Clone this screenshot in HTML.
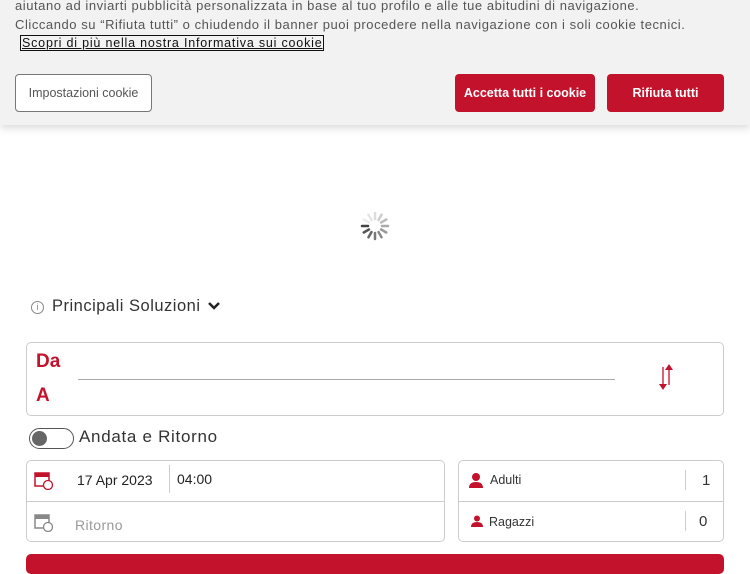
<!DOCTYPE html>
<html><head><style>
*{box-sizing:border-box;margin:0;padding:0}
body{width:750px;height:563px;overflow:hidden;background:#fff;font-family:"Liberation Sans",sans-serif;position:relative;color:#222}
.ban{position:absolute;left:0;top:0;width:750px;height:125px;background:#f2f2f2;box-shadow:0 3px 8px rgba(0,0,0,.15);z-index:2}
.t{position:absolute;left:15px;font-size:13px;color:#555;white-space:nowrap;letter-spacing:.55px}
.lnk{position:absolute;left:20px;top:35px;font-size:12.5px;color:#111;border:1px solid #111;padding:0 1px;text-decoration:underline;line-height:14px;letter-spacing:.8px;white-space:nowrap}
.btn{position:absolute;top:74px;height:38px;border-radius:4px;font-size:12.5px;display:flex;align-items:center;justify-content:center}
.red{background:#c3122b;color:#fff;font-weight:bold}
.box{position:absolute;border:1px solid #ccc;border-radius:5px}
.rl{color:#c3122b;font-weight:bold;font-size:19px;position:absolute}
</style></head><body>
<div class="ban">
<div class="t" style="top:-2px">aiutano ad inviarti pubblicità personalizzata in base al tuo profilo e alle tue abitudini di navigazione.</div>
<div class="t" style="top:17px">Cliccando su “Rifiuta tutti” o chiudendo il banner puoi procedere nella navigazione con i soli cookie tecnici.</div>
<div class="lnk">Scopri di più nella nostra Informativa sui cookie</div>
<div class="btn" style="left:15px;width:137px;background:#fff;border:1px solid #777;color:#555">Impostazioni cookie</div>
<div class="btn red" style="left:455px;width:140px">Accetta tutti i cookie</div>
<div class="btn red" style="left:607px;width:117px">Rifiuta tutti</div>
</div>
<svg style="position:absolute;left:360px;top:211px" width="30" height="30" viewBox="-15 -15 30 30">
<g stroke-width="2.5" stroke-linecap="round">
<line x1="0" y1="-13" x2="0" y2="-7" stroke="#ddd"/>
<line x1="0" y1="-13" x2="0" y2="-7" stroke="#ccc" transform="rotate(30)"/>
<line x1="0" y1="-13" x2="0" y2="-7" stroke="#bbb" transform="rotate(60)"/>
<line x1="0" y1="-13" x2="0" y2="-7" stroke="#aaa" transform="rotate(90)"/>
<line x1="0" y1="-13" x2="0" y2="-7" stroke="#999" transform="rotate(120)"/>
<line x1="0" y1="-13" x2="0" y2="-7" stroke="#888" transform="rotate(150)"/>
<line x1="0" y1="-13" x2="0" y2="-7" stroke="#777" transform="rotate(180)"/>
<line x1="0" y1="-13" x2="0" y2="-7" stroke="#666" transform="rotate(210)"/>
<line x1="0" y1="-13" x2="0" y2="-7" stroke="#555" transform="rotate(240)"/>
<line x1="0" y1="-13" x2="0" y2="-7" stroke="#444" transform="rotate(270)"/>
<line x1="0" y1="-13" x2="0" y2="-7" stroke="#eee" transform="rotate(300)"/>
<line x1="0" y1="-13" x2="0" y2="-7" stroke="#e5e5e5" transform="rotate(330)"/>
</g></svg>
<div style="position:absolute;left:31px;top:301px;width:13px;height:13px;border:1px solid #888;border-radius:50%;font-size:9px;color:#888;text-align:center;line-height:11px">i</div>
<div style="position:absolute;left:52px;top:297px;font-size:16.5px;color:#333;letter-spacing:.5px;white-space:nowrap">Principali Soluzioni</div>
<svg style="position:absolute;left:207px;top:301px" width="14" height="10"><path d="M2 2l5 5 5-5" stroke="#222" stroke-width="2.5" fill="none"/></svg>
<div class="box" style="left:26px;top:342px;width:698px;height:74px"></div>
<div class="rl" style="left:36px;top:351px">Da</div>
<div class="rl" style="left:36px;top:385px">A</div>
<div style="position:absolute;left:78px;top:379px;width:537px;height:1px;background:#aaa"></div>
<svg style="position:absolute;left:656px;top:362px" width="20" height="30"><path d="M7 5v20M13 3v20" stroke="#c3122b" stroke-width="1.3"/><path d="M3 22l4 6 4-6zM9 8l4-6 4 6z" fill="#c3122b"/></svg>
<div style="position:absolute;left:29px;top:428px;width:45px;height:21px;border:1.5px solid #555;border-radius:11px"><div style="position:absolute;left:2px;top:2px;width:15px;height:15px;border-radius:50%;background:#666"></div></div>
<div style="position:absolute;left:79px;top:427px;font-size:17px;color:#333;letter-spacing:.7px;white-space:nowrap">Andata e Ritorno</div>
<div class="box" style="left:26px;top:460px;width:419px;height:82px"></div>
<div style="position:absolute;left:27px;top:501px;width:417px;height:1px;background:#ccc"></div>
<div style="position:absolute;left:169px;top:465px;width:1px;height:28px;background:#ccc"></div>
<svg style="position:absolute;left:34px;top:470px" width="20" height="20"><rect x="1" y="3" width="14" height="13" fill="none" stroke="#c3122b" stroke-width="1.5"/><rect x="1" y="3" width="14" height="4" fill="#c3122b"/><circle cx="14" cy="15" r="4.5" fill="#fff" stroke="#c3122b" stroke-width="1.3"/></svg>
<svg style="position:absolute;left:34px;top:512px" width="20" height="20"><rect x="1" y="3" width="14" height="13" fill="none" stroke="#888" stroke-width="1.5"/><rect x="1" y="3" width="14" height="4" fill="#888"/><circle cx="14" cy="15" r="4.5" fill="#fff" stroke="#888" stroke-width="1.3"/></svg>
<div style="position:absolute;left:77px;top:472px;font-size:14px;color:#222">17 Apr 2023</div>
<div style="position:absolute;left:177px;top:471px;font-size:14px;color:#222">04:00</div>
<div style="position:absolute;left:75px;top:517px;font-size:14px;color:#999;letter-spacing:.4px">Ritorno</div>
<div class="box" style="left:458px;top:460px;width:266px;height:82px"></div>
<div style="position:absolute;left:459px;top:501px;width:264px;height:1px;background:#ccc"></div>
<div style="position:absolute;left:685px;top:470px;width:1px;height:20px;background:#ccc"></div>
<div style="position:absolute;left:685px;top:511px;width:1px;height:20px;background:#ccc"></div>
<svg style="position:absolute;left:468px;top:472px" width="16" height="16"><circle cx="8" cy="5" r="4" fill="#c3122b"/><path d="M1 16q0-6 7-6t7 6z" fill="#c3122b"/></svg>
<svg style="position:absolute;left:471px;top:515px" width="12" height="12"><circle cx="6" cy="3.5" r="3" fill="#c3122b"/><path d="M0 12q0-5 6-5t6 5z" fill="#c3122b"/></svg>
<div style="position:absolute;left:490px;top:473px;font-size:12.5px;color:#333">Adulti</div>
<div style="position:absolute;left:489px;top:515px;font-size:12.5px;color:#333">Ragazzi</div>
<div style="position:absolute;left:702px;top:472px;font-size:15px;color:#333">1</div>
<div style="position:absolute;left:699px;top:513px;font-size:15px;color:#333">0</div>
<div style="position:absolute;left:26px;top:554px;width:698px;height:20px;background:#c3122b;border-radius:5px"></div>
</body></html>
